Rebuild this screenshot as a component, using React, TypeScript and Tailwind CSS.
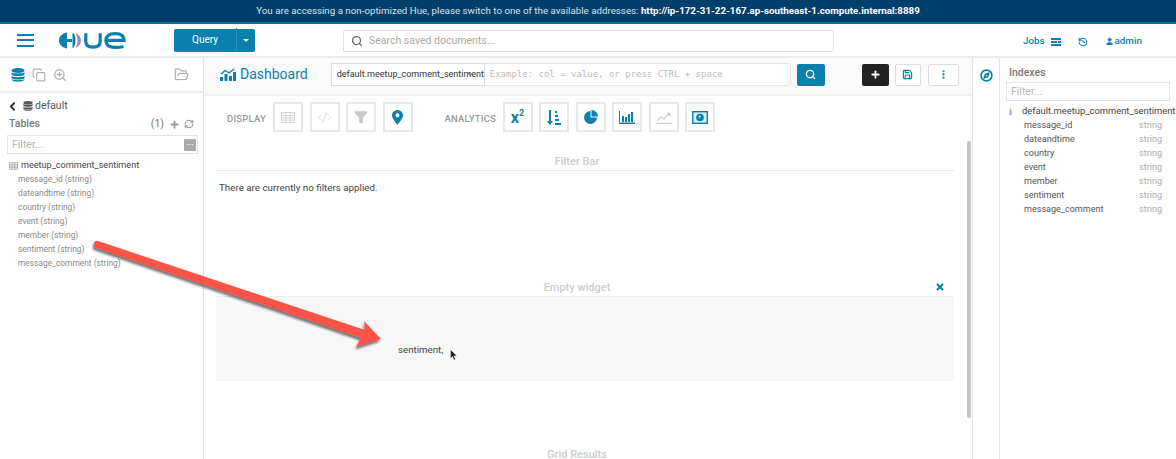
import { ChevronLeft, History, Plus, RefreshCw, Search, User, X, CodeXml, Filter, EllipsisVertical, Save, Compass, Copy, ZoomIn, FolderOpen } from "lucide-react";

const fields = ["message_id", "dateandtime", "country", "event", "member", "sentiment", "message_comment"];

const HueLogo = () => (
    <svg width="67" height="17" viewBox="0 0 67 17" fill="none">
        <path d="M8 .6C3.400 1.200 0 4.500 0 8.500s3.400 7.300 8 7.900V10h5V7H8z" fill="#0b7fad" />
        <path d="M13.500 .8v15.400c2.200-1 3-4 3-7.700s-.8-6.700-3-7.700z" fill="#0b7fad" />
        <path d="M16.500 1.200c3.600 1 5.500 3.900 5.500 7.300s-1.900 6.300-5.500 7.300c1.300-2 1.900-4.600 1.900-7.300s-.6-5.300-1.900-7.300z" fill="#a58ccb" />
        <path d="M26.800 1.200v8.300c0 3.700 2.200 5.700 7.200 5.700s7.200-2 7.200-5.700V1.200" stroke="#0b7fad" strokeWidth="3.200" />
        <path d="M47 8.400h18c0-4.500-3-6.800-8.700-6.800-6 0-9.400 2.600-9.400 6.900s3.200 6.900 9.600 6.900c3 0 5.800-.3 8-.9" stroke="#0b7fad" strokeWidth="3.200" />
    </svg>
);

const DbIcon = ({ size, color }: { size: number; color: string }) => (
    <svg width={size} height={size} viewBox="0 0 14 14" fill={color}>
        <ellipse cx="7" cy="2.500" rx="6.500" ry="2.500" />
        <path d="M.5 4.200C2 5.800 12 5.800 13.500 4.200V6.500C12 8.500 2 8.500 .5 6.500z" />
        <path d="M.5 8C2 9.600 12 9.600 13.500 8v2C12 12 2 12 .5 10z" />
        <path d="M.5 11C2 12.600 12 12.600 13.500 11v.5C12 14.500 2 14.500 .5 11.500z" />
    </svg>
);

const GridIcon = ({ w, h, color }: { w: number; h: number; color: string }) => (
    <svg width={w} height={h} viewBox="0 0 14 11" fill="none" stroke={color} strokeWidth="1">
        <rect x=".5" y=".5" width="13" height="10" />
        <path d="M.5 3.500h13M.5 5.800h13M.5 8.100h13M4.800 .5v10M9.200 .5v10" />
    </svg>
);

const ToolButton = ({ children, muted }: { children: React.ReactNode; muted?: boolean }) => (
    <div className={`w-[30px] h-[30px] border-2 border-[#e8e8e8] flex items-center justify-center ${muted ? "text-[#cfcfcf]" : "text-[#0b7fad]"}`}>
        {children}
    </div>
);

const App = () => {
    return (
        <div className="relative w-[1176px] h-[459px] overflow-hidden bg-white font-['Roboto',sans-serif] text-[#444]">
            {/* Banner */}
            <div className="h-[24px] bg-[#003f6c] border-b-2 border-[#0b6f9c] flex items-center justify-center text-[9.750px] text-[#d5e2ea]">
                <span>You are accessing a non-optimized Hue, please switch to one of the available addresses: <b className="text-white">http://ip-172-31-22-167.ap-southeast-1.compute.internal:8889</b></span>
            </div>

            {/* Top nav */}
            <div className="h-[34px] border-b-2 border-[#ececec] flex items-center">
                <div className="w-[174px] flex items-center shrink-0">
                    <div className="ml-[17px] w-[17px] flex flex-col gap-[3.500px]">
                        <div className="h-[2px] bg-[#0b7fad]" />
                        <div className="h-[2px] bg-[#0b7fad]" />
                        <div className="h-[2px] bg-[#0b7fad]" />
                    </div>
                    <div className="ml-[25px]"><HueLogo /></div>
                </div>
                <div className="w-[81px] h-[23px] bg-[#0b7fad] rounded-[2px] flex items-center text-white text-[10px] shrink-0">
                    <div className="w-[63px] text-center border-r border-[#2a91ba] leading-[24px]">Query</div>
                    <div className="flex-1 flex justify-center"><div className="border-x-[3px] border-x-transparent border-t-[3px] border-t-white" /></div>
                </div>
                <div className="ml-[88px] mt-[1px] w-[491px] h-[22px] border border-[#e0e0e0] rounded-[2px] flex items-center px-[7px] gap-[6px] text-[10.500px] text-[#a8a8a8] shrink-0">
                    <Search size={12} strokeWidth={2.500} className="text-[#666]" />
                    <span>Search saved documents...</span>
                </div>
                <div className="ml-[189px] mt-[3px] flex items-center text-[#0b7fad] text-[9.800px] font-medium">
                    <span>Jobs</span>
                    <svg className="ml-[6px]" width="10" height="8" viewBox="0 0 10 8" fill="#0b7fad"><path d="M0 0h10v2H0zM0 3h6v2H0zM7 3h3v2H7zM0 6h10v2H0z" /></svg>
                    <History size={10} strokeWidth={2.500} className="ml-[17px]" />
                    <User size={9} fill="#0b7fad" className="ml-[17px]" />
                    <span className="ml-[1px]">admin</span>
                </div>
            </div>

            {/* Body */}
            <div className="flex h-[401px]">
                {/* Left assist */}
                <div className="w-[204px] shrink-0 border-r border-[#e2e2e2]">
                    <div className="h-[35px] border-b-2 border-[#ececec] flex items-center px-[11px] gap-[7px] text-[#b0b0b0]">
                        <DbIcon size={14} color="#0b7fad" />
                        <Copy size={14} />
                        <ZoomIn size={14} strokeWidth={2.200} />
                        <FolderOpen size={15} className="ml-auto mr-[3px]" />
                    </div>
                    <div className="h-[18px] mt-[4px] flex items-center pl-[6px] text-[#555]">
                        <ChevronLeft size={13} strokeWidth={3.500} className="text-[#333]" />
                        <span className="ml-[4px] mr-[2px]"><DbIcon size={10} color="#555" /></span>
                        <span className="text-[10.500px]">default</span>
                    </div>
                    <div className="h-[18px] flex items-center px-[9px] text-[10.500px] text-[#777]">
                        <span className="font-medium">Tables</span>
                        <span className="ml-auto">(1)</span>
                        <Plus size={11} strokeWidth={4} className="ml-[5px] text-[#999]" />
                        <RefreshCw size={10} strokeWidth={2.500} className="ml-[4px] text-[#999]" />
                    </div>
                    <div className="ml-[7px] mt-[2px] w-[191px] h-[19px] border border-[#e5e5e5] flex items-center pl-[4px] pr-[1px] text-[10.500px] text-[#b5b5b5]">
                        <span>Filter...</span>
                        <div className="ml-auto w-[12px] h-[12px] rounded-[1px] bg-[#aaa] text-white text-[8px] font-bold leading-[8px] text-center">...</div>
                    </div>
                    <div className="mt-[5px] h-[13px] flex items-center pl-[9px] text-[9.100px] text-[#444]">
                        <span className="mr-[3px]"><GridIcon w={9} h={8} color="#999" /></span>
                        <span>meetup_comment_sentiment</span>
                    </div>
                    {fields.map((f) => (
                        <div key={f} className="h-[14px] leading-[14px] pl-[18px] text-[8.400px] text-[#8a8a8a]">{f} (string)</div>
                    ))}
                </div>

                {/* Center */}
                <div className="w-[769px] shrink-0 border-r border-[#e2e2e2] relative">
                    <div className="h-[38px] bg-[#fafafa] border-b-2 border-[#f0f0f0] flex items-center pl-[16px] pb-[3px]">
                        <svg width="16" height="13" viewBox="0 0 16 13" fill="#0b7fad"><path d="M0 9h3v4H0zM4.500 6h3v7h-3zM9 8h3v5H9zM13 4h3v9h-3z" /><path d="M1 6l4-3.500L9 5l5-4" stroke="#0b7fad" strokeWidth="1.400" fill="none" /></svg>
                        <span className="ml-[4px] text-[14px] text-[#0b7fad]">Dashboard</span>
                        <div className="relative ml-[23px] w-[154px] h-[23px] border border-[#ddd] bg-white flex items-center pl-[5px] text-[9px] text-[#333] whitespace-nowrap">
                            default.meetup_comment_sentiment
                            <div className="absolute right-[11px] top-[9px] border-x-[3px] border-x-transparent border-t-[3px] border-t-[#888]" />
                        </div>
                        <div className="w-[306px] h-[23px] border border-l-0 border-[#e6e6e6] bg-white rounded-r-[3px] flex items-center pl-[5px] font-['DejaVu_Sans_Mono',monospace] text-[9px] text-[#bbb]">Example: col = value, or press CTRL + space</div>
                        <div className="ml-[6px] w-[28px] h-[22px] bg-[#0b7fad] rounded-[2px] flex items-center justify-center"><Search size={11} strokeWidth={3} className="text-white" /></div>
                        <div className="ml-[37px] w-[27px] h-[22px] bg-[#222] rounded-[2px] flex items-center justify-center"><Plus size={11} strokeWidth={4} className="text-white" /></div>
                        <div className="ml-[6px] w-[26px] h-[22px] border border-[#ddd] bg-white rounded-[2px] flex items-center justify-center"><Save size={11} strokeWidth={2.500} className="text-[#0b7fad]" /></div>
                        <div className="ml-[7px] w-[31px] h-[22px] border border-[#ddd] bg-white rounded-[2px] flex items-center justify-center"><EllipsisVertical size={11} strokeWidth={3} className="text-[#0b7fad]" /></div>
                    </div>

                    <div className="h-[30px] mt-[6px] flex items-center text-[9.500px] font-medium text-[#999] tracking-[0.2px]">
                        <span className="ml-[23px] mr-[7px] mt-[4px] w-[39px]">DISPLAY</span>
                        <div className="flex gap-[6.500px]">
                            <ToolButton muted><GridIcon w={14} h={11} color="#d4d4d4" /></ToolButton>
                            <ToolButton muted><CodeXml size={15} strokeWidth={1.300} /></ToolButton>
                            <ToolButton muted><Filter size={14} fill="#c8c8c8" className="text-[#c8c8c8]" /></ToolButton>
                            <ToolButton>
                                <svg width="11" height="15" viewBox="0 0 11 15"><path fillRule="evenodd" d="M5.500 0C8.500 0 11 2.300 11 5.300 11 8.800 7.500 12 5.500 15 3.500 12 0 8.800 0 5.300 0 2.300 2.500 0 5.500 0zm0 3.200a2 2 0 1 0 0 4 2 2 0 0 0 0-4z" fill="#0b7fad" /></svg>
                            </ToolButton>
                        </div>
                        <span className="ml-[32px] mr-[7px] mt-[4px] w-[51px] whitespace-nowrap">ANALYTICS</span>
                        <div className="flex gap-[6.500px]">
                            <ToolButton><span className="text-[16px] font-bold leading-none mt-[2px]">x</span><span className="text-[9px] font-bold leading-none mb-[8px]">2</span></ToolButton>
                            <ToolButton>
                                <svg width="14" height="15" viewBox="0 0 14 15" fill="#0b7fad"><path d="M2 0h2v11h2l-3 4-3-4h2zM8 1h2v2H8zM8 5h3v2H8zM8 9h4v2H8zM8 13h6v2H8z" /></svg>
                            </ToolButton>
                            <ToolButton>
                                <svg width="14" height="14" viewBox="0 0 14 14" fill="#0b7fad"><path d="M6.500 1v6.500H13A6.500 6.500 0 1 1 6.500 1z" /><path d="M7.500 0a6.500 6.500 0 0 1 6.500 6.500H7.500z" /></svg>
                            </ToolButton>
                            <ToolButton>
                                <svg width="16" height="14" viewBox="0 0 16 14" fill="#0b7fad"><path d="M0 12.500h16V14H0zM0 1h1v11H0zM3 6h2v6H3zM6 7h2v5H6zM9 4h2v8H9zM12 2h2v10h-2z" /></svg>
                            </ToolButton>
                            <ToolButton muted>
                                <svg width="16" height="13" viewBox="0 0 16 13" fill="none" stroke="#cfcfcf" strokeWidth="1.300"><path d="M0 12.400h16M1 10l4-4 3 2 5-5M11 2.500h3v3" /></svg>
                            </ToolButton>
                            <ToolButton>
                                <svg width="16" height="13" viewBox="0 0 16 13" fill="none"><rect x=".7" y=".7" width="14.600" height="11.600" fill="#d8ebf3" stroke="#0b7fad" strokeWidth="1.400" /><circle cx="8" cy="6.500" r="3.800" fill="#0b7fad" /><path d="M7 4.500l2 .5-1 2-1.500-1z" fill="#d8ebf3" /></svg>
                            </ToolButton>
                        </div>
                    </div>

                    <div className="pl-[12px] pr-[18px]">
                        <div className="mt-[22px] h-[17px] pr-[16px] border-b border-[#e8e8e8] text-center text-[11px] leading-[16px] font-medium text-[#ccc]">Filter Bar</div>
                        <div className="mt-[10px] pl-[3px] h-[14px] text-[9.800px] leading-[14px] text-[#444]">There are currently no filters applied.</div>
                        <div className="relative mt-[85px] h-[16px] pr-[16px] text-center text-[11px] leading-[16px] font-medium text-[#ccc]">
                            Empty widget
                            <X size={10} strokeWidth={5} className="absolute right-[9px] top-[2px] text-[#0b7fad]" />
                        </div>
                        <div className="h-[85px] bg-[#f7f7f7] border-t border-[#eeeeee] pl-[182px] pt-[46px] text-[9.700px] leading-[14px] text-[#444]">sentiment,</div>
                        <div className="mt-[66px] pr-[16px] text-center text-[11px] leading-[16px] font-medium text-[#ccc]">Grid Results</div>
                    </div>

                    {/* Scrollbar */}
                    <div className="absolute right-[1px] top-[83px] w-[4px] h-[277px] rounded-full bg-[#c4c4c4]" />
                </div>

                {/* Right assist rail */}
                <div className="w-[27px] shrink-0 border-r border-[#e2e2e2] flex justify-center pt-[11px]">
                    <Compass size={13} strokeWidth={3} className="text-[#0b7fad]" />
                </div>

                {/* Right assist */}
                <div className="flex-1 min-w-0 overflow-hidden">
                    <div className="pl-[9px] mt-[8px] h-[14px] text-[10.500px] leading-[14px] font-medium text-[#777]">Indexes</div>
                    <div className="ml-[6px] mt-[2px] w-[164px] h-[19px] border border-[#e5e5e5] flex items-center pl-[4px] text-[10.500px] text-[#b5b5b5]">Filter...</div>
                    <div className="mt-[4px] h-[13px] flex items-center pl-[9px] text-[9.400px] text-[#444] whitespace-nowrap">
                        <span className="w-[13px] shrink-0 font-['Liberation_Serif',serif] font-bold text-[11px] text-[#999]">i</span>
                        <span>default.meetup_comment_sentiment</span>
                    </div>
                    {fields.map((f) => (
                        <div key={f} className="h-[14px] leading-[14px] flex pl-[24px] text-[9.050px] text-[#555]">
                            <span className="w-[115px]">{f}</span>
                            <span className="text-[#aaa]">string</span>
                        </div>
                    ))}
                </div>
            </div>

            {/* Annotation arrow */}
            <svg className="absolute left-0 top-0 pointer-events-none" width="1176" height="459" viewBox="0 0 1176 459" fill="none">
                <defs>
                    <filter id="arrowShadow" x="-10%" y="-30%" width="120%" height="170%">
                        <feDropShadow dx="-1" dy="2.500" stdDeviation="1.300" floodColor="#000" floodOpacity="0.550" />
                    </filter>
                </defs>
                <path d="M94 243 Q92.500 246.500 96 248 L361 338 L356 347 L381 339 L364 321 L365 330 L98 241 Q95 240 94 243 Z" fill="#fb5347" filter="url(#arrowShadow)" />
            </svg>

            {/* Mouse cursor */}
            <svg className="absolute left-[450px] top-[349px]" width="8" height="12" viewBox="0 0 8 12" fill="#222" stroke="#fff" strokeWidth="0.400">
                <path d="M0.500 0.500v9l2-2 1.500 3.500 1.500-.7L4 7h3z" />
            </svg>
        </div>
    );
};

export default App;
